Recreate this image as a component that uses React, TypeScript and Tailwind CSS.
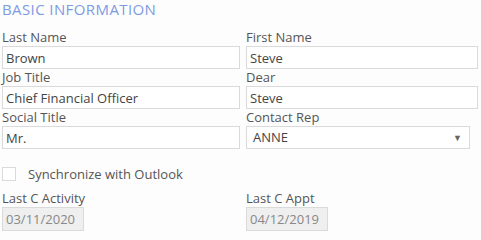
const font = { fontFamily: '"Open Sans", "Liberation Sans", sans-serif' };

function Field({ label, value, className = '' }: { label: string; value: string; className?: string }) {
  return (
    <div className="flex flex-col">
      <label className="h-[17px] text-[13px] leading-[17px] text-[#555]">{label}</label>
      <input
        readOnly
        value={value}
        className={`h-[23px] border border-[#dadada] bg-white px-[3px] text-[13px] text-[#444] outline-none ${className}`}
      />
    </div>
  );
}

function DateField({ label, value }: { label: string; value: string }) {
  return (
    <div className="flex flex-col">
      <label className="h-[17px] text-[13px] leading-[17px] text-[#555]">{label}</label>
      <input
        readOnly
        disabled
        value={value}
        className="h-[24px] w-[82px] border border-[#dadada] bg-[#efefef] px-[3px] text-[13px] text-[#888] outline-none"
      />
    </div>
  );
}

export default function App() {
  return (
    <div className="h-[240px] w-[481px] bg-[#fdfdfd] pl-[2px]" style={font}>
      <h2 className="h-[29px] text-[15px] leading-[18px] tracking-[0.4px] text-[#7d9be4]">BASIC INFORMATION</h2>

      <div className="grid grid-cols-[238px_232px] gap-x-[6px]">
        <Field label="Last Name" value="Brown" />
        <Field label="First Name" value="Steve" />
        <Field label="Job Title" value="Chief Financial Officer" />
        <Field label="Dear" value="Steve" />
        <Field label="Social Title" value="Mr." />
        <div className="flex flex-col">
          <label className="h-[17px] text-[13px] leading-[17px] text-[#555]">Contact Rep</label>
          <div className="flex h-[23px] w-[224px] items-center justify-between border border-[#dadada] bg-white pl-[6px] pr-[7px]">
            <span className="text-[13px] text-[#444]">ANNE</span>
            <span className="text-[9px] text-[#666]">▼</span>
          </div>
        </div>
      </div>

      <div className="mt-[15px] flex h-[20px] items-center gap-[12px] leading-[20px]">
        <span className="h-[14px] w-[14px] border border-[#dadada] bg-white" />
        <span className="text-[13px] text-[#555]">Synchronize with Outlook</span>
      </div>

      <div className="mt-[6px] grid grid-cols-[238px_232px] gap-x-[6px]">
        <DateField label="Last C Activity" value="03/11/2020" />
        <DateField label="Last C Appt" value="04/12/2019" />
      </div>
    </div>
  );
}
